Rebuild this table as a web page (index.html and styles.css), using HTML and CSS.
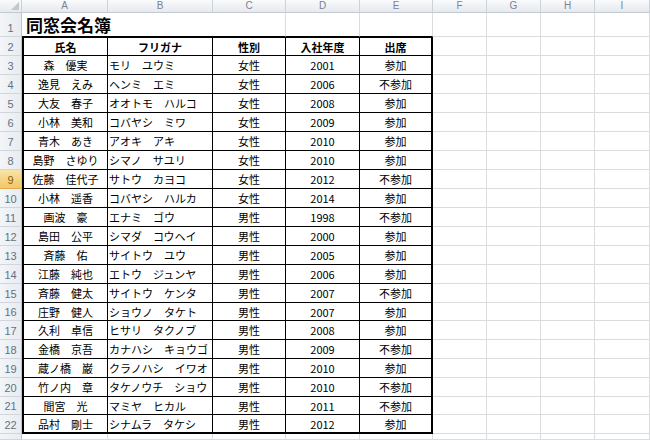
FILE: index.html
```html
<!DOCTYPE html>
<html lang="ja">
<head>
<meta charset="utf-8">
<title>同窓会名簿</title>
<link rel="stylesheet" href="styles.css">
</head>
<body>
<div class="sheet">
  <div class="c ch corner"><svg class="tri" width="8" height="8" viewBox="0 0 8 8"><polygon points="8,0 8,8 0,8" fill="#c3c7cd"/></svg></div>
  <div class="c ch">A</div><div class="c ch">B</div><div class="c ch">C</div><div class="c ch">D</div><div class="c ch">E</div><div class="c ch">F</div><div class="c ch">G</div><div class="c ch">H</div><div class="c ch">I</div>

  <div class="c rh">1</div><div class="c title tb">同窓会名簿</div><div class="c tb"></div><div class="c tb"></div><div class="c tb"></div><div class="c"></div><div class="c"></div><div class="c"></div><div class="c"></div>

  <div class="c rh">2</div><div class="c t el et b">氏名</div><div class="c t et b">フリガナ</div><div class="c t et b">性別</div><div class="c t et b">入社年度</div><div class="c t et er b">出席</div><div class="c"></div><div class="c"></div><div class="c"></div><div class="c"></div>

  <div class="c rh">3</div><div class="c t el">森　優実</div><div class="c t l">モリ　ユウミ</div><div class="c t">女性</div><div class="c t">2001</div><div class="c t er">参加</div><div class="c"></div><div class="c"></div><div class="c"></div><div class="c"></div>

  <div class="c rh">4</div><div class="c t el">逸見　えみ</div><div class="c t l">ヘンミ　エミ</div><div class="c t">女性</div><div class="c t">2006</div><div class="c t er">不参加</div><div class="c"></div><div class="c"></div><div class="c"></div><div class="c"></div>

  <div class="c rh">5</div><div class="c t el">大友　春子</div><div class="c t l">オオトモ　ハルコ</div><div class="c t">女性</div><div class="c t">2008</div><div class="c t er">参加</div><div class="c"></div><div class="c"></div><div class="c"></div><div class="c"></div>

  <div class="c rh">6</div><div class="c t el">小林　美和</div><div class="c t l">コバヤシ　ミワ</div><div class="c t">女性</div><div class="c t">2009</div><div class="c t er">参加</div><div class="c"></div><div class="c"></div><div class="c"></div><div class="c"></div>

  <div class="c rh">7</div><div class="c t el">青木　あき</div><div class="c t l">アオキ　アキ</div><div class="c t">女性</div><div class="c t">2010</div><div class="c t er">参加</div><div class="c"></div><div class="c"></div><div class="c"></div><div class="c"></div>

  <div class="c rh">8</div><div class="c t el">島野　さゆり</div><div class="c t l">シマノ　サユリ</div><div class="c t">女性</div><div class="c t">2010</div><div class="c t er">参加</div><div class="c"></div><div class="c"></div><div class="c"></div><div class="c"></div>

  <div class="c rh sel">9</div><div class="c t el">佐藤　佳代子</div><div class="c t l">サトウ　カヨコ</div><div class="c t">女性</div><div class="c t">2012</div><div class="c t er">不参加</div><div class="c"></div><div class="c"></div><div class="c"></div><div class="c"></div>

  <div class="c rh">10</div><div class="c t el">小林　遥香</div><div class="c t l">コバヤシ　ハルカ</div><div class="c t">女性</div><div class="c t">2014</div><div class="c t er">参加</div><div class="c"></div><div class="c"></div><div class="c"></div><div class="c"></div>

  <div class="c rh">11</div><div class="c t el">画波　豪</div><div class="c t l">エナミ　ゴウ</div><div class="c t">男性</div><div class="c t">1998</div><div class="c t er">不参加</div><div class="c"></div><div class="c"></div><div class="c"></div><div class="c"></div>

  <div class="c rh">12</div><div class="c t el">島田　公平</div><div class="c t l">シマダ　コウヘイ</div><div class="c t">男性</div><div class="c t">2000</div><div class="c t er">参加</div><div class="c"></div><div class="c"></div><div class="c"></div><div class="c"></div>

  <div class="c rh">13</div><div class="c t el">斉藤　佑</div><div class="c t l">サイトウ　ユウ</div><div class="c t">男性</div><div class="c t">2005</div><div class="c t er">参加</div><div class="c"></div><div class="c"></div><div class="c"></div><div class="c"></div>

  <div class="c rh">14</div><div class="c t el">江藤　純也</div><div class="c t l">エトウ　ジュンヤ</div><div class="c t">男性</div><div class="c t">2006</div><div class="c t er">参加</div><div class="c"></div><div class="c"></div><div class="c"></div><div class="c"></div>

  <div class="c rh">15</div><div class="c t el">斉藤　健太</div><div class="c t l">サイトウ　ケンタ</div><div class="c t">男性</div><div class="c t">2007</div><div class="c t er">不参加</div><div class="c"></div><div class="c"></div><div class="c"></div><div class="c"></div>

  <div class="c rh">16</div><div class="c t el">庄野　健人</div><div class="c t l">ショウノ　タケト</div><div class="c t">男性</div><div class="c t">2007</div><div class="c t er">参加</div><div class="c"></div><div class="c"></div><div class="c"></div><div class="c"></div>

  <div class="c rh">17</div><div class="c t el">久利　卓信</div><div class="c t l">ヒサリ　タクノブ</div><div class="c t">男性</div><div class="c t">2008</div><div class="c t er">参加</div><div class="c"></div><div class="c"></div><div class="c"></div><div class="c"></div>

  <div class="c rh">18</div><div class="c t el">金橋　京吾</div><div class="c t l">カナハシ　キョウゴ</div><div class="c t">男性</div><div class="c t">2009</div><div class="c t er">不参加</div><div class="c"></div><div class="c"></div><div class="c"></div><div class="c"></div>

  <div class="c rh">19</div><div class="c t el">蔵ノ橋　巌</div><div class="c t l">クラノハシ　イワオ</div><div class="c t">男性</div><div class="c t">2010</div><div class="c t er">参加</div><div class="c"></div><div class="c"></div><div class="c"></div><div class="c"></div>

  <div class="c rh">20</div><div class="c t el">竹ノ内　章</div><div class="c t l">タケノウチ　ショウ</div><div class="c t">男性</div><div class="c t">2010</div><div class="c t er">不参加</div><div class="c"></div><div class="c"></div><div class="c"></div><div class="c"></div>

  <div class="c rh">21</div><div class="c t el">間宮　光</div><div class="c t l">マミヤ　ヒカル</div><div class="c t">男性</div><div class="c t">2011</div><div class="c t er">不参加</div><div class="c"></div><div class="c"></div><div class="c"></div><div class="c"></div>

  <div class="c rh">22</div><div class="c t el eb">品村　剛士</div><div class="c t l eb">シナムラ　タケシ</div><div class="c t eb">男性</div><div class="c t eb">2012</div><div class="c t er eb">参加</div><div class="c"></div><div class="c"></div><div class="c"></div><div class="c"></div>

  <div class="c rh"></div><div class="c"></div><div class="c"></div><div class="c"></div><div class="c"></div><div class="c"></div><div class="c"></div><div class="c"></div><div class="c"></div><div class="c"></div>
</div>
</body>
</html>
```

FILE: styles.css
```css
html, body {
  margin: 0;
  padding: 0;
  background: #ffffff;
}

.sheet {
  display: grid;
  width: 650px;
  height: 440px;
  overflow: hidden;
  grid-template-columns: 22px 86px 105px 73px 74px 73px 54px 54px 54px 55px;
  grid-template-rows: 13px 24px repeat(14, 19px) 18px repeat(4, 19px) 18px 19px 6px;
  font-family: "Noto Sans CJK JP", "Noto Sans", sans-serif;
  font-size: 11px;
  color: #000;
}

.c {
  box-sizing: border-box;
  border-right: 1px solid #dadcdd;
  border-bottom: 1px solid #dadcdd;
  display: flex;
  align-items: center;
  justify-content: center;
  padding-top: 1px;
  white-space: nowrap;
  overflow: hidden;
  line-height: 1;
}

.ch {
  background: linear-gradient(#f9fafb, #e6e9ee);
  border-right-color: #cdd1d8;
  border-bottom-color: #c4c9d1;
  color: #7a8391;
  font-family: "Liberation Sans", sans-serif;
  font-size: 10px;
  padding-top: 0;
}

.corner {
  justify-content: flex-end;
  align-items: flex-end;
  padding: 0 2px 2px 0;
}

.tri {
  display: block;
}

.rh {
  background: linear-gradient(90deg, #f3f5f8, #e8ebf0);
  border-right-color: #bfc5ce;
  border-bottom-color: #d2d6dc;
  color: #667083;
  font-family: "Liberation Sans", sans-serif;
  font-size: 11px;
  align-items: flex-end;
  padding: 0 0 2px 0;
}

.sel {
  background: linear-gradient(#f9e4a8, #f2c766);
  border-bottom-color: #e0ad4a;
  color: #8a5c10;
}

.title {
  grid-column: span 2;
  justify-content: flex-start;
  align-items: flex-end;
  padding: 0 0 3px 4px;
  font-size: 17px;
  font-weight: bold;
  border-right: none;
}

.tb {
  border-bottom-color: #000;
}

.t {
  border-right-color: #000;
  border-bottom-color: #000;
}

.et {
  border-top: 1px solid #000;
}

.el {
  border-left: 2px solid #000;
}

.er {
  border-right: 2px solid #000;
}

.eb {
  border-bottom: 2px solid #000;
}

.l {
  justify-content: flex-start;
  padding-left: 1px;
}

.b {
  font-weight: bold;
}
```
